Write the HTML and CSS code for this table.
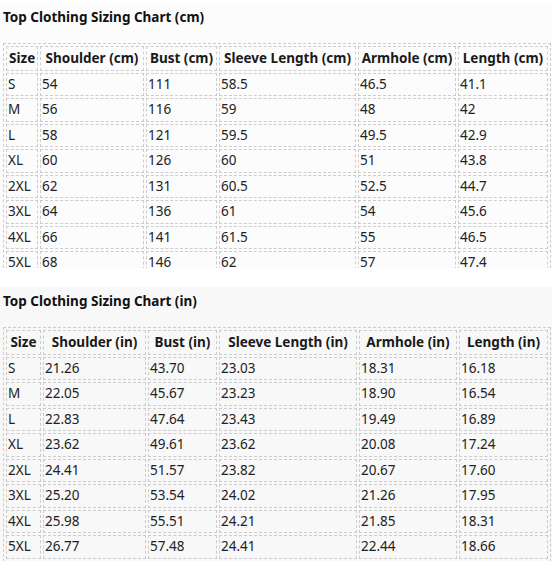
FILE: index.html
```html
<!DOCTYPE html>
<html lang="en">
<head>
<meta charset="utf-8">
<title>Top Clothing Sizing Chart</title>
<link rel="stylesheet" href="styles.css">
</head>
<body>
<section class="chart chart-cm">
  <h2 class="chart-title">Top Clothing Sizing Chart (cm)</h2>
  <table class="size-table">
    <thead>
      <tr><th>Size</th><th>Shoulder (cm)</th><th>Bust (cm)</th><th>Sleeve Length (cm)</th><th>Armhole (cm)</th><th>Length (cm)</th></tr>
    </thead>
    <tbody>
      <tr><td>S</td><td>54</td><td>111</td><td>58.5</td><td>46.5</td><td>41.1</td></tr>
      <tr><td>M</td><td>56</td><td>116</td><td>59</td><td>48</td><td>42</td></tr>
      <tr><td>L</td><td>58</td><td>121</td><td>59.5</td><td>49.5</td><td>42.9</td></tr>
      <tr><td>XL</td><td>60</td><td>126</td><td>60</td><td>51</td><td>43.8</td></tr>
      <tr><td>2XL</td><td>62</td><td>131</td><td>60.5</td><td>52.5</td><td>44.7</td></tr>
      <tr><td>3XL</td><td>64</td><td>136</td><td>61</td><td>54</td><td>45.6</td></tr>
      <tr><td>4XL</td><td>66</td><td>141</td><td>61.5</td><td>55</td><td>46.5</td></tr>
      <tr><td>5XL</td><td>68</td><td>146</td><td>62</td><td>57</td><td>47.4</td></tr>
    </tbody>
  </table>
</section>
<section class="chart chart-in">
  <h2 class="chart-title">Top Clothing Sizing Chart (in)</h2>
  <table class="size-table">
    <thead>
      <tr><th>Size</th><th>Shoulder (in)</th><th>Bust (in)</th><th>Sleeve Length (in)</th><th>Armhole (in)</th><th>Length (in)</th></tr>
    </thead>
    <tbody>
      <tr><td>S</td><td>21.26</td><td>43.70</td><td>23.03</td><td>18.31</td><td>16.18</td></tr>
      <tr><td>M</td><td>22.05</td><td>45.67</td><td>23.23</td><td>18.90</td><td>16.54</td></tr>
      <tr><td>L</td><td>22.83</td><td>47.64</td><td>23.43</td><td>19.49</td><td>16.89</td></tr>
      <tr><td>XL</td><td>23.62</td><td>49.61</td><td>23.62</td><td>20.08</td><td>17.24</td></tr>
      <tr><td>2XL</td><td>24.41</td><td>51.57</td><td>23.82</td><td>20.67</td><td>17.60</td></tr>
      <tr><td>3XL</td><td>25.20</td><td>53.54</td><td>24.02</td><td>21.26</td><td>17.95</td></tr>
      <tr><td>4XL</td><td>25.98</td><td>55.51</td><td>24.21</td><td>21.85</td><td>18.31</td></tr>
      <tr><td>5XL</td><td>26.77</td><td>57.48</td><td>24.41</td><td>22.44</td><td>18.66</td></tr>
    </tbody>
  </table>
</section>
</body>
</html>
```
FILE: styles.css
```css
html, body {
  margin: 0;
  padding: 0;
  background: #ffffff;
}
body {
  padding-top: 3px;
  font-family: "Noto Sans", "Open Sans", sans-serif;
  font-size: 13.5px;
  color: #222222;
}
.chart {
  padding: 0 1px 0 3px;
  overflow: hidden;
}
.chart-cm {
  background: #fcfcfc;
  height: 265px;
  margin-bottom: 19px;
}
.chart-in {
  background: #f8f8f8;
}
.chart-title {
  margin: 0 0 12px;
  font-size: 13.5px;
  line-height: 28px;
  font-weight: 700;
  color: #111111;
}
.size-table {
  width: 100%;
  table-layout: fixed;
  border: 1px dashed #cccccc;
  border-spacing: 2px;
}
.size-table th,
.size-table td {
  box-sizing: border-box;
  border: 1px dashed #cccccc;
  line-height: 19.5px;
}
.size-table th {
  padding: 1.5px 2px;
  font-weight: 700;
  text-align: center;
  color: #1a1a1a;
  white-space: nowrap;
}
.size-table td {
  padding: 1px;
  text-align: left;
}
.chart-cm th:nth-child(1) { width: 32px; }
.chart-cm th:nth-child(2) { width: 104px; }
.chart-cm th:nth-child(3) { width: 71px; }
.chart-cm th:nth-child(4) { width: 137px; }
.chart-cm th:nth-child(5) { width: 98px; }
.chart-in th:nth-child(1) { width: 35px; }
.chart-in th:nth-child(2) { width: 103px; }
.chart-in th:nth-child(3) { width: 69px; }
.chart-in th:nth-child(4) { width: 138px; }
.chart-in th:nth-child(5) { width: 98px; }
```
